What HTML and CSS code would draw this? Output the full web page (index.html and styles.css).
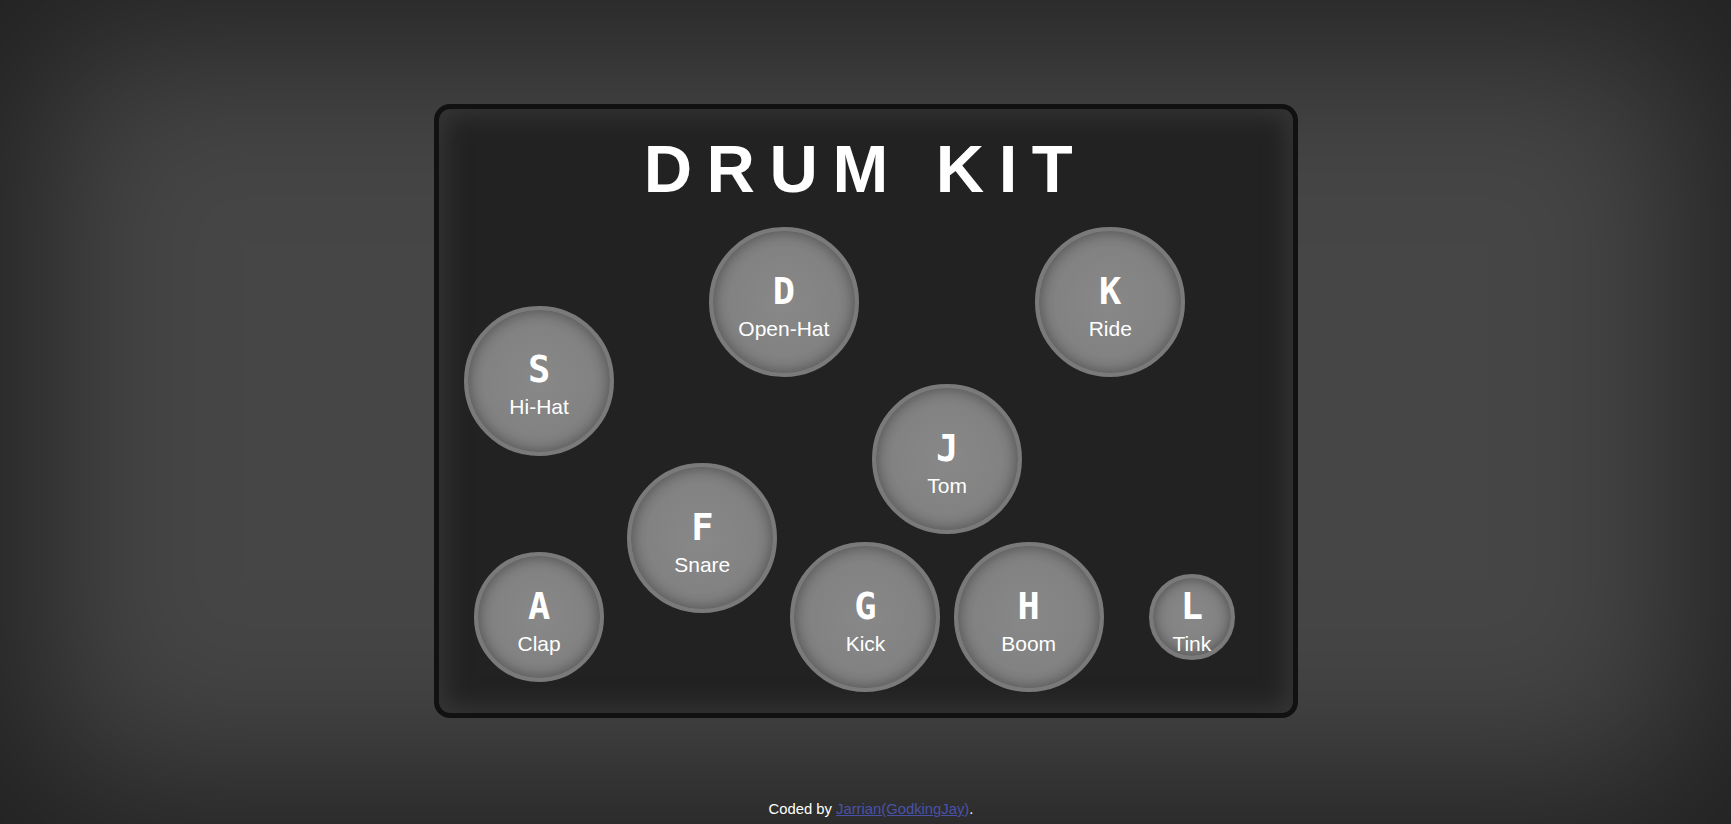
FILE: index.html
```html
<!DOCTYPE html>
<html lang="en">
<head>
<meta charset="utf-8">
<title>Drum Kit</title>
<link rel="stylesheet" href="styles.css">
</head>
<body>
<main class="kit">
  <h1 class="kit-title">DRUM KIT</h1>
  <div class="pads">
    <div class="pad pad-d"><kbd class="key">D</kbd><span class="sound">Open-Hat</span></div>
    <div class="pad pad-k"><kbd class="key">K</kbd><span class="sound">Ride</span></div>
    <div class="pad pad-s"><kbd class="key">S</kbd><span class="sound">Hi-Hat</span></div>
    <div class="pad pad-j"><kbd class="key">J</kbd><span class="sound">Tom</span></div>
    <div class="pad pad-f"><kbd class="key">F</kbd><span class="sound">Snare</span></div>
    <div class="pad pad-a pad-medium"><kbd class="key">A</kbd><span class="sound">Clap</span></div>
    <div class="pad pad-g"><kbd class="key">G</kbd><span class="sound">Kick</span></div>
    <div class="pad pad-h"><kbd class="key">H</kbd><span class="sound">Boom</span></div>
    <div class="pad pad-l pad-small"><kbd class="key">L</kbd><span class="sound">Tink</span></div>
  </div>
</main>
<footer class="credit">Coded by <a href="#" class="credit-link">Jarrian(GodkingJay)</a>.</footer>
</body>
</html>
```
FILE: styles.css
```css
html, body {
  margin: 0;
  padding: 0;
}

body {
  min-height: 100vh;
  box-sizing: border-box;
  display: flex;
  flex-direction: column;
  align-items: center;
  background: #464646;
  box-shadow: inset 0 0 170px 40px rgba(0, 0, 0, 0.55);
  font-family: "Liberation Sans", Arial, sans-serif;
  color: #fff;
  padding-bottom: 6px;
}

.kit {
  margin-top: 104px;
  width: 864px;
  box-sizing: border-box;
  border: 5px solid #111;
  border-radius: 16px;
  background: #222;
  box-shadow: inset 0 0 24px 6px #363636;
  padding: 26px 19px 17px;
}

.kit-title {
  margin: 0 0 20px;
  font-size: 67px;
  line-height: 68px;
  font-weight: bold;
  letter-spacing: 14.5px;
  text-align: center;
  text-indent: 0;
  color: #fff;
}

.pads {
  display: grid;
  grid-template-columns: repeat(10, 81.6px);
  grid-template-rows: repeat(6, 78.75px);
}

.pad {
  justify-self: center;
  align-self: center;
  width: 150px;
  height: 150px;
  box-sizing: border-box;
  border-radius: 50%;
  border: 4px solid #7a7a7a;
  background: radial-gradient(circle at center, #888 0%, #828282 55%, #6e6e6e 100%);
  box-shadow: inset 0 0 14px rgba(0, 0, 0, 0.35);
  display: flex;
  flex-direction: column;
  align-items: center;
  justify-content: center;
  padding-top: 8px;
  grid-column: span 2;
  grid-row: span 2;
}

.pad-medium {
  width: 130px;
  height: 130px;
}

.pad-small {
  width: 86px;
  height: 86px;
}

.key {
  font-family: "DejaVu Sans Mono", monospace;
  font-weight: bold;
  font-size: 37px;
  line-height: 37px;
  color: #fff;
}

.sound {
  margin-top: 9px;
  font-family: "Liberation Sans", Arial, sans-serif;
  font-size: 21px;
  line-height: 20.5px;
  color: #fff;
  white-space: nowrap;
}

.pad-d { grid-column: 4 / span 2; grid-row: 1 / span 2; }
.pad-k { grid-column: 8 / span 2; grid-row: 1 / span 2; }
.pad-s { grid-column: 1 / span 2; grid-row: 2 / span 2; }
.pad-j { grid-column: 6 / span 2; grid-row: 3 / span 2; }
.pad-f { grid-column: 3 / span 2; grid-row: 4 / span 2; }
.pad-a { grid-column: 1 / span 2; grid-row: 5 / span 2; }
.pad-g { grid-column: 5 / span 2; grid-row: 5 / span 2; }
.pad-h { grid-column: 7 / span 2; grid-row: 5 / span 2; }
.pad-l { grid-column: 9 / span 2; grid-row: 5 / span 2; }

.credit {
  margin-top: auto;
  padding-left: 11px;
  font-size: 14.8px;
  line-height: 17px;
  color: #fff;
}

.credit-link {
  color: #4a52a8;
}
```
